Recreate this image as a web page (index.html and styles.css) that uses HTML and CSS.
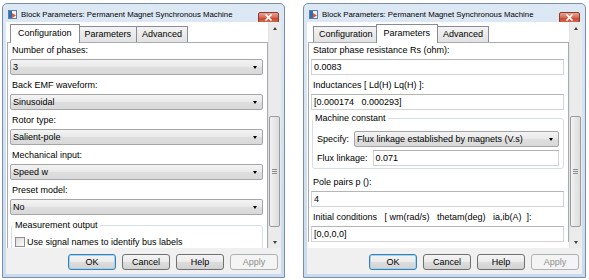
FILE: index.html
```html
<!DOCTYPE html>
<html lang="en">
<head>
    <meta charset="UTF-8">
    <title>Block Parameters: Permanent Magnet Synchronous Machine</title>
    <link rel="stylesheet" href="styles.css">
</head>
<body>
    <div class="desktop">
        <!-- Configuration tab -->
        <div class="window">
            <div class="titlebar">
                <svg class="app-icon" width="9" height="9" viewBox="0 0 9 9">
                    <rect x="0.5" y="0.5" width="8" height="8" fill="#eef4fa" stroke="#5d7fa6"/>
                    <rect x="1" y="1" width="3" height="7" fill="#2f6db5"/>
                    <path d="M4 3 L8 5.5 L4 8 Z" fill="#e2572b"/>
                </svg>
                <span class="title">Block Parameters: Permanent Magnet Synchronous Machine</span>
                <div class="close">
                    <svg width="9" height="7" viewBox="0 0 9 7">
                        <path d="M1.5 0.5 L7.5 6.5 M7.5 0.5 L1.5 6.5" stroke="#fff" stroke-width="1.7"/>
                    </svg>
                </div>
            </div>
            <div class="client">
                <div class="scroll-area">
                    <div class="pane">
                        <div class="tabs">
                            <div class="tab active">Configuration</div>
                            <div class="tab">Parameters</div>
                            <div class="tab">Advanced</div>
                        </div>
                        <div class="tab-body">
                            <div class="field">
                                <div class="label">Number of phases:</div>
                                <div class="combo">3</div>
                            </div>
                            <div class="field">
                                <div class="label">Back EMF waveform:</div>
                                <div class="combo">Sinusoidal</div>
                            </div>
                            <div class="field">
                                <div class="label">Rotor type:</div>
                                <div class="combo">Salient-pole</div>
                            </div>
                            <div class="field">
                                <div class="label">Mechanical input:</div>
                                <div class="combo">Speed w</div>
                            </div>
                            <div class="field">
                                <div class="label">Preset model:</div>
                                <div class="combo">No</div>
                            </div>
                            <fieldset class="group">
                                <legend>Measurement output</legend>
                                <div class="check-row">
                                    <span class="checkbox"></span>
                                    <span>Use signal names to identify bus labels</span>
                                </div>
                            </fieldset>
                        </div>
                    </div>
                    <div class="scrollbar">
                        <div class="sb-arrow up"></div>
                        <div class="track">
                            <div class="thumb"><span></span><span></span><span></span></div>
                        </div>
                        <div class="sb-arrow down"></div>
                    </div>
                </div>
                <div class="buttons">
                    <button class="btn default">OK</button>
                    <button class="btn">Cancel</button>
                    <button class="btn">Help</button>
                    <button class="btn disabled">Apply</button>
                </div>
            </div>
        </div>

        <!-- Parameters tab -->
        <div class="window">
            <div class="titlebar">
                <svg class="app-icon" width="9" height="9" viewBox="0 0 9 9">
                    <rect x="0.5" y="0.5" width="8" height="8" fill="#eef4fa" stroke="#5d7fa6"/>
                    <rect x="1" y="1" width="3" height="7" fill="#2f6db5"/>
                    <path d="M4 3 L8 5.5 L4 8 Z" fill="#e2572b"/>
                </svg>
                <span class="title">Block Parameters: Permanent Magnet Synchronous Machine</span>
                <div class="close">
                    <svg width="9" height="7" viewBox="0 0 9 7">
                        <path d="M1.5 0.5 L7.5 6.5 M7.5 0.5 L1.5 6.5" stroke="#fff" stroke-width="1.7"/>
                    </svg>
                </div>
            </div>
            <div class="client">
                <div class="scroll-area">
                    <div class="pane">
                        <div class="tabs">
                            <div class="tab">Configuration</div>
                            <div class="tab active">Parameters</div>
                            <div class="tab">Advanced</div>
                        </div>
                        <div class="tab-body">
                            <div class="field">
                                <div class="label">Stator phase resistance Rs (ohm):</div>
                                <div class="textbox">0.0083</div>
                            </div>
                            <div class="field">
                                <div class="label">Inductances [ Ld(H) Lq(H) ]:</div>
                                <div class="textbox">[0.000174   0.000293]</div>
                            </div>
                            <fieldset class="group machine">
                                <legend>Machine constant</legend>
                                <div class="inline-row first">
                                    <span>Specify:</span>
                                    <div class="combo">Flux linkage established by magnets (V.s)</div>
                                </div>
                                <div class="inline-row">
                                    <span>Flux linkage:</span>
                                    <div class="textbox">0.071</div>
                                </div>
                            </fieldset>
                            <div class="field">
                                <div class="label">Pole pairs p ():</div>
                                <div class="textbox">4</div>
                            </div>
                            <div class="field">
                                <div class="label">Initial conditions   [ wm(rad/s)   thetam(deg)   ia,ib(A)  ]:</div>
                                <div class="textbox">[0,0,0,0]</div>
                            </div>
                        </div>
                    </div>
                    <div class="scrollbar">
                        <div class="sb-arrow up"></div>
                        <div class="track">
                            <div class="thumb"><span></span><span></span><span></span></div>
                        </div>
                        <div class="sb-arrow down"></div>
                    </div>
                </div>
                <div class="buttons">
                    <button class="btn default">OK</button>
                    <button class="btn">Cancel</button>
                    <button class="btn">Help</button>
                    <button class="btn disabled">Apply</button>
                </div>
            </div>
        </div>
    </div>
</body>
</html>
```

FILE: styles.css
```css
body {
    margin: 0;
    background-color: #ffffff;
    font-family: 'Liberation Sans', Arial, sans-serif;
    font-size: 9px;
    color: #000000;
}

.desktop {
    display: flex;
    gap: 18px;
    padding: 3px 0 0 2px;
}

/* window frame */
.window {
    width: 283px;
    height: 275px;
    box-sizing: border-box;
    border: 1px solid #7b8ea6;
    border-radius: 5px 5px 0 0;
    background: linear-gradient(#dde8f5, #c9dbee);
    padding: 0 3px 3px 3px;
    display: flex;
    flex-direction: column;
}

.titlebar {
    height: 18px;
    box-sizing: border-box;
    padding-top: 3px;
    display: flex;
    align-items: center;
}

.app-icon {
    margin-left: 2px;
    margin-right: 4px;
    flex-shrink: 0;
}

.title {
    font-size: 7.8px;
    white-space: nowrap;
}

.close {
    margin-left: auto;
    margin-right: 2px;
    align-self: flex-start;
    margin-top: 5px;
    width: 21px;
    height: 11px;
    box-sizing: border-box;
    border: 1px solid #8a3a30;
    border-radius: 2px;
    background: linear-gradient(#e8a493, #d66a55 50%, #c7472f 51%, #d2654a);
    display: flex;
    align-items: center;
    justify-content: center;
}

.client {
    flex: 1;
    display: flex;
    flex-direction: column;
    background-color: #f0f0f0;
}

.scroll-area {
    height: 226px;
    display: flex;
    background-color: #ffffff;
    overflow: hidden;
}

.pane {
    flex: 1;
    margin-left: 1px;
    min-width: 0;
}

/* tabs */
.tabs {
    display: flex;
    align-items: flex-end;
    height: 20px;
    padding-left: 5px;
}

.tab {
    height: 16px;
    box-sizing: border-box;
    line-height: 15px;
    padding: 0 5px;
    border: 1px solid #898c95;
    border-bottom: none;
    background: linear-gradient(#f3f3f3, #e2e2e2);
    margin-right: -1px;
    white-space: nowrap;
}

.tab.active {
    height: 19px;
    line-height: 17px;
    margin: 0 -1px -1px -2px;
    padding: 0 7px;
    background: #ffffff;
    position: relative;
    z-index: 1;
}

.tab-body {
    border: 1px solid #a7abb2;
    border-bottom: none;
    padding: 0 4px 0 2px;
    display: flex;
    flex-direction: column;
    gap: 3px;
}

.label {
    height: 14px;
    line-height: 14px;
    padding-left: 2px;
    margin-bottom: 2px;
    white-space: pre;
}

.combo {
    position: relative;
    height: 16px;
    box-sizing: border-box;
    line-height: 14px;
    padding-left: 2px;
    border: 1px solid #a5a5a5;
    border-radius: 2px;
    background: linear-gradient(#f4f4f4, #e9e9e9 50%, #dedede 51%, #d9d9d9);
    white-space: nowrap;
}

.combo::after {
    content: "";
    position: absolute;
    right: 5px;
    top: 6px;
    border-left: 2.5px solid transparent;
    border-right: 2.5px solid transparent;
    border-top: 3px solid #000000;
}

.textbox {
    height: 16px;
    box-sizing: border-box;
    line-height: 14px;
    padding-left: 2px;
    border: 1px solid #d2d2d2;
    border-top-color: #b5b5b5;
    background-color: #ffffff;
    white-space: pre;
}

/* group boxes */
.group {
    margin: 0 0 0 1px;
    padding: 0 3px 6px 3px;
    border: 1px solid #d5dfe5;
    border-radius: 3px;
    min-width: 0;
}

.group legend {
    padding: 0 2px;
    margin-left: -2px;
    line-height: 14px;
}

.group.machine {
    margin-top: -2px;
    margin-bottom: 3px;
    padding: 0 4px 2px 2px;
}

.check-row {
    margin-top: 3px;
    height: 14px;
    display: flex;
    align-items: center;
    white-space: nowrap;
}

.checkbox {
    width: 10px;
    height: 10px;
    box-sizing: border-box;
    border: 1px solid #8f8f8f;
    background: linear-gradient(135deg, #dcdcdc, #fbfbfb);
    margin-right: 2px;
}

.inline-row {
    display: flex;
    align-items: center;
    gap: 5px;
    margin-top: 3px;
    padding-left: 2px;
    white-space: nowrap;
}

.inline-row.first {
    margin-top: 6px;
}

.inline-row .combo,
.inline-row .textbox {
    flex: 1;
}

/* scrollbar */
.scrollbar {
    width: 13px;
    flex-shrink: 0;
    display: flex;
    flex-direction: column;
    background-color: #ebebeb;
    border-left: 1px solid #e3e3e3;
    box-sizing: border-box;
}

.sb-arrow {
    height: 12px;
    display: flex;
    align-items: center;
    justify-content: center;
}

.sb-arrow.up::after {
    content: "";
    border-left: 2.5px solid transparent;
    border-right: 2.5px solid transparent;
    border-bottom: 3px solid #404040;
}

.sb-arrow.down::after {
    content: "";
    border-left: 2.5px solid transparent;
    border-right: 2.5px solid transparent;
    border-top: 3px solid #404040;
}

.track {
    flex: 1;
}

.thumb {
    margin: 82px 1px 0 0;
    height: 111px;
    box-sizing: border-box;
    border: 1px solid #9b9b9b;
    border-radius: 2px;
    background: linear-gradient(to right, #f2f2f2, #dcdcdc);
    display: flex;
    flex-direction: column;
    align-items: center;
    justify-content: center;
    gap: 1px;
}

.thumb span {
    width: 5px;
    height: 1px;
    background-color: #8c8c8c;
}

/* dialog buttons */
.buttons {
    flex: 1;
    display: flex;
    justify-content: flex-end;
    align-items: flex-start;
    gap: 6px;
    padding: 6px 3px 0 0;
}

.btn {
    width: 48px;
    height: 16px;
    padding: 0;
    font-family: inherit;
    font-size: 9px;
    color: #000000;
    border: 1px solid #707070;
    border-radius: 3px;
    background: linear-gradient(#f3f3f3, #ebebeb 50%, #dddddd 51%, #d2d2d2);
}

.btn.default {
    border-color: #3c7fb1;
    box-shadow: inset 0 0 0 1px #9fd4f5;
}

.btn.disabled {
    color: #8d8d8d;
    border-color: #adb2b5;
    background: #f4f4f4;
}
```
